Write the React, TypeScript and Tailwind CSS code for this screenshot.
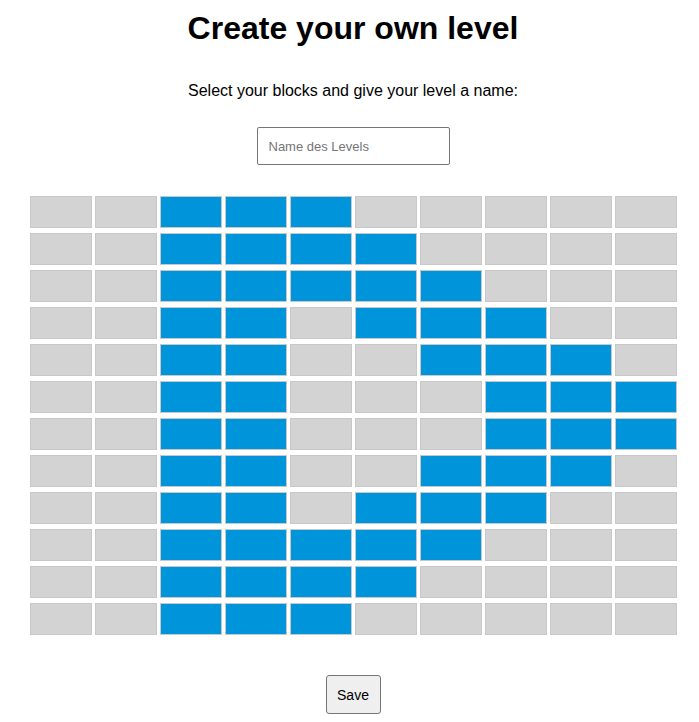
const rows: number[][] = [
  [2, 3, 4],
  [2, 3, 4, 5],
  [2, 3, 4, 5, 6],
  [2, 3, 5, 6, 7],
  [2, 3, 6, 7, 8],
  [2, 3, 7, 8, 9],
  [2, 3, 7, 8, 9],
  [2, 3, 6, 7, 8],
  [2, 3, 5, 6, 7],
  [2, 3, 4, 5, 6],
  [2, 3, 4, 5],
  [2, 3, 4],
];

export default function App() {
  return (
    <div className="min-h-screen bg-white pl-[7px] font-['Liberation_Sans',Arial,sans-serif] text-black">
      <h1 className="pt-[10px] text-center text-[32px] font-bold leading-[37px]">Create your own level</h1>
      <p className="mt-[35px] text-center text-base leading-[18px]">
        Select your blocks and give your level a name:
      </p>
      <div className="mt-[27px] flex justify-center">
        <input
          type="text"
          placeholder="Name des Levels"
          className="h-[38px] w-[193px] rounded-[2px] border border-[#767676] px-[11px] text-[13px] placeholder:text-[#757575] outline-none"
        />
      </div>

      {/* Level grid */}
      <div className="mt-[31px] flex flex-col gap-[5px] pl-[23px]">
        {rows.map((blue, r) => (
          <div key={r} className="flex gap-[3px]">
            {Array.from({ length: 10 }).map((_, c) => (
              <div
                key={c}
                className={`h-[32px] w-[62px] border border-[#c8c8c8] ${
                  blue.includes(c) ? "bg-[#0094db]" : "bg-[#d3d3d3]"
                }`}
              />
            ))}
          </div>
        ))}
      </div>

      <div className="mt-[40px] flex justify-center">
        <button className="h-[39px] w-[55px] rounded-[3px] border border-[#767676] bg-[#efefef] text-sm">
          Save
        </button>
      </div>
    </div>
  );
}
